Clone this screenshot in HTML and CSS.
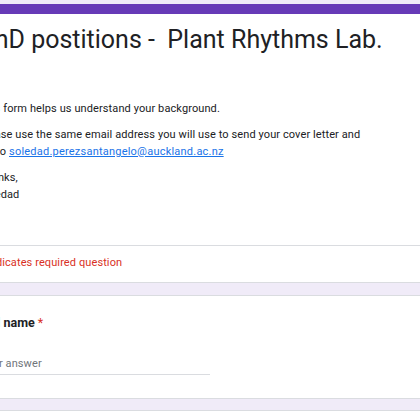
FILE: index.html
```html
<!DOCTYPE html>
<html>
<head>
<meta charset="utf-8">
<link rel="stylesheet" href="styles.css">
</head>
<body>
<div class="page">
  <div class="card head-card">
    <div class="head-main">
      <div class="title">PhD postitions -&nbsp; Plant Rhythms Lab.</div>
      <div class="desc">
        <p>This form helps us understand your background.</p>
        <p>Please use the same email address you will use to send your cover letter and<br>CV to <a class="link" href="#">soledad.perezsantangelo@auckland.ac.nz</a> </p>
        <p>Thanks,<br>Soledad</p>
      </div>
    </div>
    <div class="required-note">* Indicates required question</div>
  </div>
  <div class="card question">
    <div class="q-title">Full name <span class="star">*</span></div>
    <div class="answer">Your answer</div>
  </div>
  <div class="card next"></div>
</div>
</body>
</html>
```
FILE: styles.css
```css
html, body {
  margin: 0;
  padding: 0;
}
body {
  background: #f0ebf8;
  font-family: Roboto, "Liberation Sans", sans-serif;
  color: #202124;
  overflow: hidden;
  height: 420px;
}
.page {
  margin-left: -45px;
  width: 520px;
  padding-top: 4px;
}
.card {
  background: #fff;
  border: 1px solid #dadce0;
  border-right: none;
  border-radius: 8px 0 0 8px;
}
.head-card {
  border-top: 10px solid #673ab7;
  border-left: none;
  border-radius: 0;
}
.head-main {
  padding: 10px 24px 42px 24px;
  border-bottom: 1px solid #dadce0;
}
.title {
  font-size: 25px;
  line-height: 32px;
  color: #202124;
  white-space: nowrap;
}
.desc {
  margin-top: 44px;
  font-size: 11px;
  line-height: 17px;
  letter-spacing: 0.1px;
  white-space: nowrap;
}
.desc p {
  margin: 0 0 9px 0;
}
.desc p:last-child {
  margin-bottom: 0;
}
.link {
  color: #1a73e8;
  text-decoration: underline;
  letter-spacing: 0.22px;
}
.required-note {
  padding: 8px 24px 11px 24px;
  font-size: 11px;
  line-height: 17px;
  letter-spacing: 0.1px;
  color: #d93025;
}
.question {
  margin-top: 12px;
  height: 104px;
  padding: 19px 24px 0 24px;
  box-sizing: border-box;
}
.q-title {
  font-size: 12.5px;
  font-weight: 700;
  line-height: 16px;
  color: #202124;
}
.star {
  color: #d93025;
  font-weight: 400;
}
.answer {
  margin-top: 25px;
  width: 230px;
  font-size: 11px;
  line-height: 16px;
  letter-spacing: 0.1px;
  color: #70757a;
  padding-bottom: 2px;
  border-bottom: 1px solid #dadce0;
}
.next {
  margin-top: 11px;
  height: 40px;
}
```
